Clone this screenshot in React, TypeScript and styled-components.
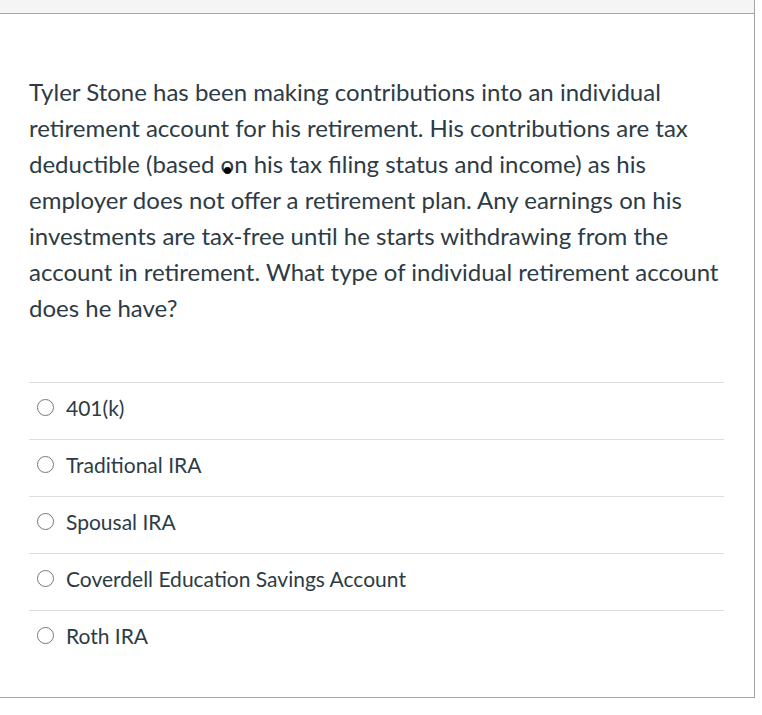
import React from "react";
import styled, { createGlobalStyle } from "styled-components";

const Global = createGlobalStyle`
  html, body { margin: 0; padding: 0; background: #ffffff; }
  body { font-family: Lato, "Noto Sans", sans-serif; color: #2d3b45; }
`;

const Frame = styled.div`
  position: relative;
  width: 754px;
  border-right: 1px solid #a5a5a5;
  border-bottom: 1px solid #a5a5a5;
  background: #ffffff;
`;

const HeaderStrip = styled.div`
  height: 13px;
  background: #f5f5f5;
  border-bottom: 1px solid #a5a5a5;
`;

const Body = styled.div`
  padding: 60px 30px 30px 29px;
`;

const Question = styled.p`
  margin: 0;
  font-size: 24px;
  line-height: 36px;
  color: #2d3b45;
`;

const CursorDot = styled.span`
  position: absolute;
  left: 224px;
  top: 167px;
  width: 7px;
  height: 7px;
  border-radius: 50%;
  background: #000000;
`;

const Answers = styled.div`
  margin-top: 56px;
  display: flex;
  flex-direction: column;
`;

const Answer = styled.label`
  display: flex;
  align-items: center;
  gap: 12px;
  height: 56px;
  border-top: 1px solid #dddddd;
  padding-left: 8px;
  font-size: 21px;
  color: #2d3b45;
`;

const Radio = styled.span`
  box-sizing: border-box;
  width: 17px;
  height: 17px;
  border: 1.5px solid #777777;
  border-radius: 50%;
  flex: none;
  margin-top: -7px;
`;

const AnswerText = styled.span`
  margin-top: -7px;
`;

const answers = [
  "401(k)",
  "Traditional IRA",
  "Spousal IRA",
  "Coverdell Education Savings Account",
  "Roth IRA",
];

export default function App() {
  return (
    <>
      <Global />
      <Frame>
        <HeaderStrip />
        <Body>
          <Question>
            Tyler Stone has been making contributions into an individual
            retirement account for his retirement. His contributions are tax
            deductible (based on his tax filing status and income) as his
            employer does not offer a retirement plan. Any earnings on his
            investments are tax-free until he starts withdrawing from the
            account in retirement. What type of individual retirement account
            does he have?
          </Question>
          <Answers>
            {answers.map((a) => (
              <Answer key={a}>
                <Radio />
                <AnswerText>{a}</AnswerText>
              </Answer>
            ))}
          </Answers>
        </Body>
        <CursorDot />
      </Frame>
    </>
  );
}
